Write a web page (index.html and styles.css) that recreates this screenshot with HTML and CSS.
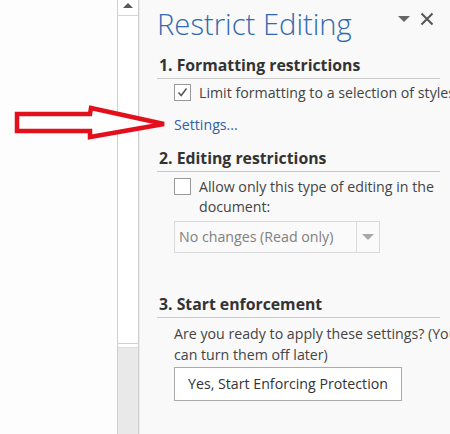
FILE: index.html
```html
<!DOCTYPE html>
<html>
<head>
<meta charset="utf-8">
<link rel="stylesheet" href="styles.css">
</head>
<body>
<div class="screen">
  <div class="doc"></div>
  <div class="scrollbar">
    <div class="sb-up"><span class="sb-tri"></span></div>
    <div class="sb-thumb"></div>
    <div class="sb-track"></div>
  </div>
  <div class="panel">
    <div class="titlebar">
      <h1 class="title">Restrict Editing</h1>
      <div class="title-icons">
        <span class="menu-tri"></span>
        <svg class="close" width="14" height="14" viewBox="0 0 14 14"><path d="M1.5 1.5L12.5 12.5M12.5 1.5L1.5 12.5" stroke="#555" stroke-width="2" fill="none"/></svg>
      </div>
    </div>

    <div class="section-head first">1. Formatting restrictions</div>
    <div class="check-row nowrap">
      <span class="checkbox">
        <svg width="15" height="15" viewBox="0 0 15 15"><path d="M3.5 7.5L6.2 10.5L11.5 3.5" stroke="#555" stroke-width="1.5" fill="none"/></svg>
      </span>
      <span class="label">Limit formatting to a selection of styles</span>
    </div>
    <div class="link">Settings...</div>

    <div class="section-head second">2. Editing restrictions</div>
    <div class="check-row two">
      <span class="checkbox"></span>
      <span class="label">Allow only this type of editing in the<br>document:</span>
    </div>
    <div class="dropdown">
      <span class="dd-text">No changes (Read only)</span>
      <span class="dd-btn"><span class="dd-tri"></span></span>
    </div>

    <div class="section-head third">3. Start enforcement</div>
    <p class="info">Are you ready to apply these settings? (You<br>can turn them off later)</p>
    <div class="button">Yes, Start Enforcing Protection</div>
  </div>
</div>
<svg class="arrow" width="180" height="150" viewBox="0 0 180 150">
  <polygon points="17,114 90,114 91,108 164,124 90,137 90,131 17,131" fill="#fff" stroke="#e3101b" stroke-width="4.5" stroke-linejoin="miter"/>
</svg>
</body>
</html>
```

FILE: styles.css
```css
html, body {
  margin: 0;
  padding: 0;
  width: 450px;
  height: 434px;
  overflow: hidden;
  background: #fdfdfd;
  font-family: "Open Sans", "DejaVu Sans", sans-serif;
}

.screen {
  display: flex;
  width: 450px;
  height: 434px;
}

.doc {
  width: 117px;
  background: #fdfdfd;
}

.scrollbar {
  width: 20px;
  display: flex;
  flex-direction: column;
  border-left: 1px solid #cfcfcf;
  border-right: 1px solid #cfcfcf;
  background: #fff;
}

.sb-up {
  height: 15px;
  border-bottom: 1px solid #d6d6d6;
  display: flex;
  justify-content: center;
  align-items: flex-start;
}

.sb-tri {
  margin-top: 3px;
  width: 0;
  height: 0;
  border-left: 5px solid transparent;
  border-right: 5px solid transparent;
  border-bottom: 5px solid #5a5a5a;
}

.sb-thumb {
  height: 327px;
  background: #fff;
  border-bottom: 1px solid #cfcfcf;
}

.sb-track {
  flex: 1;
  margin-top: 3px;
  background: #e9e9e9;
  border-top: 1px solid #dcdcdc;
}

.panel {
  flex: 1;
  min-width: 0;
  background: #f9f9f9;
  border-left: 1px solid #ececec;
  padding: 0 10px 0 17px;
  color: #444;
  font-size: 14.2px;
}

.titlebar {
  display: flex;
  align-items: flex-start;
  height: 50px;
}

.title {
  margin: 5px 0 0 0;
  font-size: 29.2px;
  line-height: 38px;
  font-weight: 300;
  color: #3169b0;
  white-space: nowrap;
  flex: 1;
}

.title-icons {
  display: flex;
  align-items: center;
  gap: 10px;
  margin-top: 12px;
  margin-right: 6px;
}

.menu-tri {
  width: 0;
  height: 0;
  border-left: 6px solid transparent;
  border-right: 6px solid transparent;
  border-top: 6px solid #666;
}

.section-head {
  font-weight: 700;
  font-size: 15.8px;
  line-height: 20px;
  color: #333;
  padding: 0 0 3px 2px;
  border-bottom: 1px solid #c9c9c9;
  white-space: nowrap;
}

.section-head.first { margin-top: 5px; }
.section-head.second { margin-top: 13px; }
.section-head.third { margin-top: 41px; }

.check-row {
  display: flex;
  align-items: flex-start;
  margin-left: 17px;
  line-height: 20px;
  white-space: nowrap;
}

.check-row.nowrap { margin-top: 4px; }
.check-row.two { margin-top: 5px; }

.checkbox {
  flex: none;
  width: 15px;
  height: 15px;
  border: 1px solid #9a9a9a;
  background: #fff;
  margin-top: 1px;
  margin-right: 8px;
  display: flex;
}

.link {
  margin: 12px 0 0 17px;
  line-height: 20px;
  color: #2f62a6;
}

.dropdown {
  display: flex;
  margin: 4px 0 0 17px;
  width: 204px;
  height: 30px;
  border: 1px solid #d9d9d9;
  background: #fafafa;
}

.dd-text {
  flex: 1;
  padding-left: 4px;
  line-height: 30px;
  color: #808080;
  white-space: nowrap;
}

.dd-btn {
  width: 22px;
  border-left: 1px solid #dcdcdc;
  display: flex;
  justify-content: center;
  align-items: center;
}

.dd-tri {
  width: 0;
  height: 0;
  border-left: 6px solid transparent;
  border-right: 6px solid transparent;
  border-top: 6px solid #a8a8a8;
}

.info {
  margin: 5px 0 0 17px;
  line-height: 21px;
  white-space: nowrap;
}

.button {
  margin: 2px 0 0 17px;
  width: 226px;
  height: 32px;
  line-height: 32px;
  text-align: center;
  border: 1px solid #ababab;
  background: #fff;
  color: #333;
  white-space: nowrap;
}

.arrow {
  position: absolute;
  left: 0;
  top: 0;
}
```
